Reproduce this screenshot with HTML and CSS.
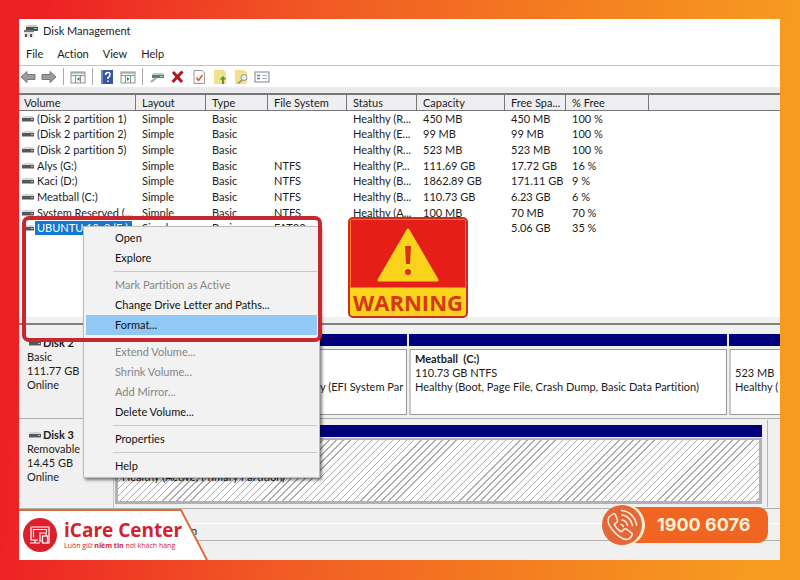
FILE: index.html
```
<!DOCTYPE html>
<html lang="en">
<head>
<meta charset="utf-8">
<title>Disk Management</title>
<link rel="stylesheet" href="styles.css">
</head>
<body>
<svg width="0" height="0" class="defs" aria-hidden="true">
  <symbol id="drive" viewBox="0 0 12 8">
    <path d="M1 1h10l1 2H0z" fill="#d4d4d4"/>
    <rect y="3" width="12" height="3" fill="#55585a"/>
    <rect y="6" width="12" height="1" fill="#aaa"/>
    <rect x="9" y="4" width="2" height="1" fill="#b8c4ba"/>
  </symbol>
</svg>
<main class="window">
  <header class="titlebar">
    <svg class="app-icon" viewBox="0 0 16 14" aria-hidden="true">
      <path d="M4 1h10l1 3H3z" fill="#c6cac8"/>
      <path d="M3 3h12v4H3z" fill="#4c5251"/>
      <path d="M11 4h3v1h-3z" fill="#8fc7a0"/>
      <path d="M1 6h10v7H1z" fill="#e4e4e4"/>
      <path d="M1 6h10v2H1z" fill="#777"/>
      <path d="M2 10h2v3H2zM7 10h2v3H7z" fill="#555"/>
    </svg>
    <h1>Disk Management</h1>
  </header>
  <nav class="menubar">
    <button>File</button><button>Action</button><button>View</button><button>Help</button>
  </nav>
  <div class="toolbar">
    <button aria-label="Back"><svg viewBox="0 0 16 14"><path d="M1 7l6-5.500v3h8v5H7v3z" fill="#9b9b9b" stroke="#777"/></svg></button>
    <button aria-label="Forward"><svg viewBox="0 0 16 14"><path d="M15 7L9 1.500v3H1v5h8v3z" fill="#9b9b9b" stroke="#777"/></svg></button>
    <i></i>
    <button aria-label="Console tree"><svg viewBox="0 0 16 14"><rect x="1" y="2" width="14" height="11" fill="#f4f8f5" stroke="#8b9890"/><path d="M1 3h14M1 5.500h14M5.500 6v7M10.500 6v7" stroke="#8b9890"/><path d="M9.500 7v4L7 9z" fill="#3d8050"/></svg></button>
    <i></i>
    <button aria-label="Help"><svg viewBox="0 0 16 14"><rect x="2" width="12" height="14" fill="#3557a5"/><rect x="2" width="2" height="14" fill="#7089c4"/><path d="M6.500 5Q6.500 2.500 9 2.500T11 5Q11 6.500 9 7.500V9M9 10.500v1.500" fill="none" stroke="#fff" stroke-width="1.500"/></svg></button>
    <button aria-label="Action pane"><svg viewBox="0 0 16 14"><rect x="1" y="2" width="14" height="11" fill="#f4f8f5" stroke="#8b9890"/><path d="M1 3h14M1 5.500h14M5.500 6v7M10.500 6v7" stroke="#8b9890"/><path d="M7 7v4l2.500-2z" fill="#3d8050"/></svg></button>
    <i></i>
    <button aria-label="Refresh"><svg viewBox="0 0 16 14"><path d="M4 3h10l1 2H3z" fill="#bccbc8"/><path d="M3 5h12v3H3z" fill="#667675"/><path d="M11 6h3v1h-3z" fill="#a9dbb5"/><path d="M7 8l-5 4" stroke="#9aa6a9" stroke-width="2"/></svg></button>
    <button aria-label="Delete"><svg viewBox="0 0 16 14"><path d="M3 2l9 10M12.500 1.500L2.500 12" stroke="#b8141c" stroke-width="3"/></svg></button>
    <button aria-label="Check"><svg viewBox="0 0 16 14"><path d="M3 .5h8l2.500 2.500v10.500H3z" fill="#fbfbfb" stroke="#999"/><path d="M5.500 7.500l2 3 4-5.500" fill="none" stroke="#d05a3c" stroke-width="1.500"/></svg></button>
    <button aria-label="Up"><svg viewBox="0 0 16 14"><path d="M2 0h9l3 2v12H2z" fill="#f4df8c"/><path d="M10 14V9.500H7.500L11 6l3.500 3.500H12V14z" fill="#4aa32c"/></svg></button>
    <button aria-label="Find"><svg viewBox="0 0 16 14"><path d="M2 0h9l3 2v12H2z" fill="#f4df8c"/><circle cx="11" cy="7.500" r="3" fill="#e2eef6" stroke="#8b98a0"/><path d="M9 10l-4 3.500" stroke="#9a8a60" stroke-width="1.500"/></svg></button>
    <button aria-label="Properties"><svg viewBox="0 0 16 14"><rect x="1" y="2" width="14" height="10" fill="#fafcfd" stroke="#7d8990"/><path d="M3 5.500h3M3 8.500h3" stroke="#5a87b0" stroke-width="1.500"/><path d="M8 5.500h5M8 8.500h5" stroke="#aab4ba"/></svg></button>
  </div>

  <section class="volumes">
    <table>
      <colgroup><col class="c-vol"><col class="c-lay"><col class="c-type"><col class="c-fs"><col class="c-stat"><col class="c-cap"><col class="c-free"><col class="c-pct"><col></colgroup>
      <thead><tr><th>Volume</th><th>Layout</th><th>Type</th><th>File System</th><th>Status</th><th>Capacity</th><th>Free Spa...</th><th>% Free</th><th></th></tr></thead>
      <tbody>
        <tr><td><svg><use href="#drive"/></svg>(Disk 2 partition 1)</td><td>Simple</td><td>Basic</td><td></td><td>Healthy (R...</td><td>450 MB</td><td>450 MB</td><td>100 %</td><td></td></tr>
        <tr><td><svg><use href="#drive"/></svg>(Disk 2 partition 2)</td><td>Simple</td><td>Basic</td><td></td><td>Healthy (E...</td><td>99 MB</td><td>99 MB</td><td>100 %</td><td></td></tr>
        <tr><td><svg><use href="#drive"/></svg>(Disk 2 partition 5)</td><td>Simple</td><td>Basic</td><td></td><td>Healthy (R...</td><td>523 MB</td><td>523 MB</td><td>100 %</td><td></td></tr>
        <tr><td><svg><use href="#drive"/></svg>Alys (G:)</td><td>Simple</td><td>Basic</td><td>NTFS</td><td>Healthy (P...</td><td>111.69 GB</td><td>17.72 GB</td><td>16 %</td><td></td></tr>
        <tr><td><svg><use href="#drive"/></svg>Kaci (D:)</td><td>Simple</td><td>Basic</td><td>NTFS</td><td>Healthy (B...</td><td>1862.89 GB</td><td>171.11 GB</td><td>9 %</td><td></td></tr>
        <tr><td><svg><use href="#drive"/></svg>Meatball (C:)</td><td>Simple</td><td>Basic</td><td>NTFS</td><td>Healthy (B...</td><td>110.73 GB</td><td>6.23 GB</td><td>6 %</td><td></td></tr>
        <tr><td><svg><use href="#drive"/></svg>System Reserved (...</td><td>Simple</td><td>Basic</td><td>NTFS</td><td>Healthy (A...</td><td>100 MB</td><td>70 MB</td><td>70 %</td><td></td></tr>
        <tr><td><svg><use href="#drive"/></svg><mark>UBUNTU 18_0 (E:)</mark></td><td>Simple</td><td>Basic</td><td>FAT32</td><td></td><td></td><td>5.06 GB</td><td>35 %</td><td></td></tr>
      </tbody>
    </table>
  </section>

  <section class="disks">
    <div class="disk">
      <div class="disk-label"><h2><svg><use href="#drive"/></svg>Disk 2</h2><p>Basic</p><p>111.77 GB</p><p>Online</p></div>
      <div class="parts">
        <div class="part reserved"><div class="bar"></div><div class="box"></div></div>
        <div class="part efi"><div class="bar"></div><div class="box"><p>Healthy (EFI System Par</p></div></div>
        <div class="part main-part"><div class="bar"></div><div class="box"><h3>Meatball&nbsp; (C:)</h3><p>110.73 GB NTFS</p><p>Healthy (Boot, Page File, Crash Dump, Basic Data Partition)</p></div></div>
        <div class="part tail"><div class="bar"></div><div class="box"><p>523 MB</p><p>Healthy (</p></div></div>
      </div>
    </div>
    <div class="disk removable">
      <div class="disk-label"><h2><svg><use href="#drive"/></svg>Disk 3</h2><p>Removable</p><p>14.45 GB</p><p>Online</p></div>
      <div class="parts">
        <div class="part"><div class="bar"></div><div class="box hatched"><p>Healthy (Active, Primary Partition)</p></div></div>
      </div>
    </div>
  </section>
  <footer class="status"><div class="legend">Primary partition</div></footer>

  <div class="context" role="menu">
    <button>Open</button>
    <button>Explore</button>
    <hr>
    <button disabled>Mark Partition as Active</button>
    <button>Change Drive Letter and Paths...</button>
    <button class="current">Format...</button>
    <hr>
    <button disabled>Extend Volume...</button>
    <button disabled>Shrink Volume...</button>
    <button disabled>Add Mirror...</button>
    <button>Delete Volume...</button>
    <hr>
    <button>Properties</button>
    <hr>
    <button>Help</button>
  </div>
  <div class="highlight"></div>

  <div class="warning">
    <div class="sign"><svg viewBox="0 0 62 54" aria-hidden="true"><path d="M31 2L60 52H2z" fill="#fbd31c" stroke="#fbd31c" stroke-width="3" stroke-linejoin="round"/><path d="M28 18h6l-1 18h-4z" fill="#d9301a"/><circle cx="31" cy="44" r="3" fill="#d9301a"/></svg></div>
    <strong>WARNING</strong>
  </div>

  <div class="brand">
    <svg class="brand-shape" viewBox="0 0 190 51" aria-hidden="true"><path d="M0 1H162L188 51H0z" fill="#fff"/><path d="M0 1H162L188 51" fill="none" stroke="#d8703c" stroke-width="2"/></svg>
    <svg class="brand-mark" viewBox="0 0 34 34" aria-hidden="true"><circle cx="17" cy="17" r="17" fill="#dc1f2c"/><g fill="none" stroke="#fff" stroke-width="1.200"><path d="M15 22H8V9h18v5.500"/><path d="M10.500 19.500v-8h13v3M7 25h10M12 22v3"/><path d="M17 23v-8h6v3M16 23h3"/><rect x="19.500" y="18" width="5" height="7"/><path d="M26 14.500V25h-1.500"/></g></svg>
    <div class="brand-text"><strong>iCare Center</strong><span>Luôn giữ <b>niềm tin</b> nơi khách hàng</span></div>
  </div>

  <a class="phone" href="tel:19006076">
    <svg viewBox="0 0 44 44" aria-hidden="true"><circle cx="23" cy="22" r="21" fill="#fff0d6"/><circle cx="21" cy="22" r="20" fill="#e4673a"/><g fill="none" stroke="#fff0d6" stroke-width="1.500" stroke-linecap="round" stroke-linejoin="round"><path d="M12 11l-4 3c-2 3-.5 8 3.500 13s10 9.500 14 9.500c2.500 0 4-1.500 5.500-4 .5-1 .5-2-.5-2.700l-5-3.600c-1-.7-2-.5-2.800.3l-2 2.300c-3-1.300-6-4.300-7.400-7.700l2.400-1.700c1-.7 1.200-1.700.7-2.800l-2-5c-.5-1-1.500-1.300-2.400-.6z"/><path d="M21 17c3 .5 5 2.500 5.500 5.500M21 12c5.500.5 9.500 5 10.500 10.500M20.500 7.500c8 .5 14 7 15 14.500M20 21.500c1.300 0 2 .8 2.300 2"/></g></svg>
    <span>1900 6076</span>
  </a>
</main>
</body>
</html>
```
FILE: styles.css
```
* { box-sizing: border-box; }
body {
  margin: 0;
  min-height: 100vh;
  padding: 19px 20px 20px 19px;
  display: flex;
  background: linear-gradient(95deg, #ed2024 5%, #f15a24 38%, #f47f20 68%, #f79a20 93%);
  font: 11px/14px Lato, "Noto Sans", sans-serif;
  font-variant-ligatures: none;
  color: #1c1c1c;
}
h1, h2, h3, p { margin: 0; font-size: inherit; font-weight: 400; }
button { font: inherit; color: inherit; border: 0; padding: 0; background: none; text-align: left; }
.defs { position: absolute; }

.window {
  position: relative;
  flex: 1;
  min-width: 0;
  display: flex;
  flex-direction: column;
  background: #fff;
  overflow: hidden;
}
.titlebar { display: flex; align-items: center; gap: 4px; height: 24px; padding-left: 4px; }
.app-icon { width: 16px; height: 14px; }
.menubar { display: flex; align-items: center; gap: 14px; height: 22px; padding-left: 7px; }
.toolbar {
  display: flex; align-items: center; gap: 5px;
  height: 22px; padding-left: 1px;
  border-top: 1px solid #c4c4c4;
}
.toolbar button { width: 16px; height: 14px; }
.toolbar button svg { display: block; width: 16px; height: 14px; }
.toolbar i { width: 1px; height: 17px; margin: 0 1px; background: #aaa; }

.volumes {
  display: flex; padding: 6px 0 81px;
  background: linear-gradient(#ebebed 6px, #fff 6px);
  border-bottom: 6px solid #f0f0f0;
}
table {
  width: 100%; height: 143px;
  table-layout: fixed; border-collapse: separate; border-spacing: 0;
}
.c-vol { width: 117px; } .c-lay { width: 70px; } .c-type { width: 62px; }
.c-fs { width: 79px; } .c-stat { width: 70px; } .c-cap { width: 88px; }
.c-free { width: 61px; } .c-pct { width: 83px; }
th {
  height: 18px; padding: 0 0 0 6px; text-align: left; font-weight: 400;
  background: #eeeef0; border-top: 2px solid #77777a; border-bottom: 1px solid #77777a;
  border-right: 1px solid #77777a; white-space: nowrap;
}
th:first-child { padding-left: 5px; }
th:last-child { border-right: 0; }
td { padding: 0 0 0 6px; white-space: nowrap; vertical-align: middle; }
td:first-child { padding-left: 3px; }
td svg { width: 12px; height: 8px; margin-right: 3px; }
mark { display: inline-block; padding: 0 4px 0 2px; margin-left: -2px; background: #1479cf; color: #fff; }

.disks { background: #f0f0f0; border-top: 2px solid #808080; padding-top: 3px; }
.disk { display: flex; height: 91px; border-bottom: 1px solid #b0b0b0; }
.disk-label { width: 95px; padding: 8px 0 0 8px; border-right: 1px solid #c4c4c4; }
.disk-label h2, .box h3 { font-weight: 700; }
.disk-label h2 { padding-left: 2px; }
.disk-label svg { width: 12px; height: 8px; margin-right: 2px; }
.parts { flex: 1; min-width: 0; display: flex; gap: 2px; padding: 6px 0 3px 1px; }
.part { display: flex; flex-direction: column; min-width: 0; }
.reserved { flex: 0 0 165px; } .efi { flex: 0 0 125px; } .main-part { flex: 1 1 318px; } .tail { flex: 0 0 51px; }
.bar { height: 12px; background: #00007c; }
.box {
  flex: 1; margin-top: 3px; padding: 2px 0 0 4px; overflow: hidden; white-space: nowrap;
  background: #fff; border: 1px solid #9a9a9a; border-left: 2px solid #c8c8c8;
}
.tail .box { padding-top: 16px; border-right: 0; }
.efi .box { padding-top: 30px; }
.removable { height: 90px; border-bottom: 1px solid #b0b0b0; }
.removable .disk-label { padding-top: 9px; }
.removable .parts { margin: 1px 12px 1px 0; padding: 5px 5px 3px 1px; border-right: 1px solid #b4b4b4; }
.removable .part { flex: 1; }
.hatched {
  margin-top: 1px; padding-top: 30px; border: 2px solid #b0b0b8; border-width: 2px 3px 3px;
  background: repeating-linear-gradient(135deg, #fff 0 4px, #acacac 4px 5px);
}
.status { flex: 1; background: #f0f0f0; padding-top: 14px; }
.legend { height: 18px; padding-left: 97px; border-top: 1px solid #fff; border-bottom: 1px solid #b4b4b4; }

.context {
  position: absolute; left: 64px; top: 207px; width: 237px;
  padding: 1px 2px; background: #f2f2f2; border: 1px solid #bdbdbd;
  box-shadow: 2px 2px 3px rgba(0, 0, 0, .5);
  color: #111;
}
.context button { display: block; width: 100%; height: 20px; padding-left: 29px; }
.context button:disabled { color: #858585; }
.context .current { background: #90c8f6; }
.context hr { height: 1px; margin: 3px 0 3px 27px; border: 0; background: #c8c8c8; }
.highlight {
  position: absolute; left: 3px; top: 197px; width: 300px; height: 126px;
  border: 4px solid #c9272f; border-radius: 7px;
}

.warning {
  position: absolute; left: 329px; top: 198px; width: 120px;
  border: 2px solid #cc2f16; border-radius: 5px; background: #fbd31c; overflow: hidden;
  text-align: center;
}
.sign { height: 69px; padding-top: 8px; background: #e51f17; border: 1px solid #f2792a; }
.sign svg { width: 62px; height: 54px; }
.warning strong { display: block; font: 700 22px/28px "Open Sans", sans-serif; color: #d43a12; }

.brand { position: absolute; left: 0; bottom: 0; width: 190px; height: 51px; display: flex; align-items: center; gap: 7px; padding-left: 4px; }
.brand-shape { position: absolute; left: 0; top: 0; width: 190px; height: 51px; }
.brand-mark { position: relative; width: 34px; height: 34px; }
.brand-text { position: relative; display: flex; flex-direction: column; white-space: nowrap; color: #d3222e; }
.brand-text strong { font: 700 19px/22px "Open Sans", sans-serif; }
.brand-text span { font: 7px/10px "Open Sans", sans-serif; }

.phone { position: absolute; right: 12px; bottom: 14px; width: 167px; height: 42px; display: flex; align-items: center; text-decoration: none; }
.phone::before { content: ""; position: absolute; inset: 3px 0 3px 20px; background: #f16522; border-radius: 0 10px 10px 0; }
.phone svg { position: relative; flex: none; width: 44px; height: 44px; }
.phone span { position: relative; margin-left: 12px; font: 700 18px/22px Inter, sans-serif; color: #fff0d6; }
```
